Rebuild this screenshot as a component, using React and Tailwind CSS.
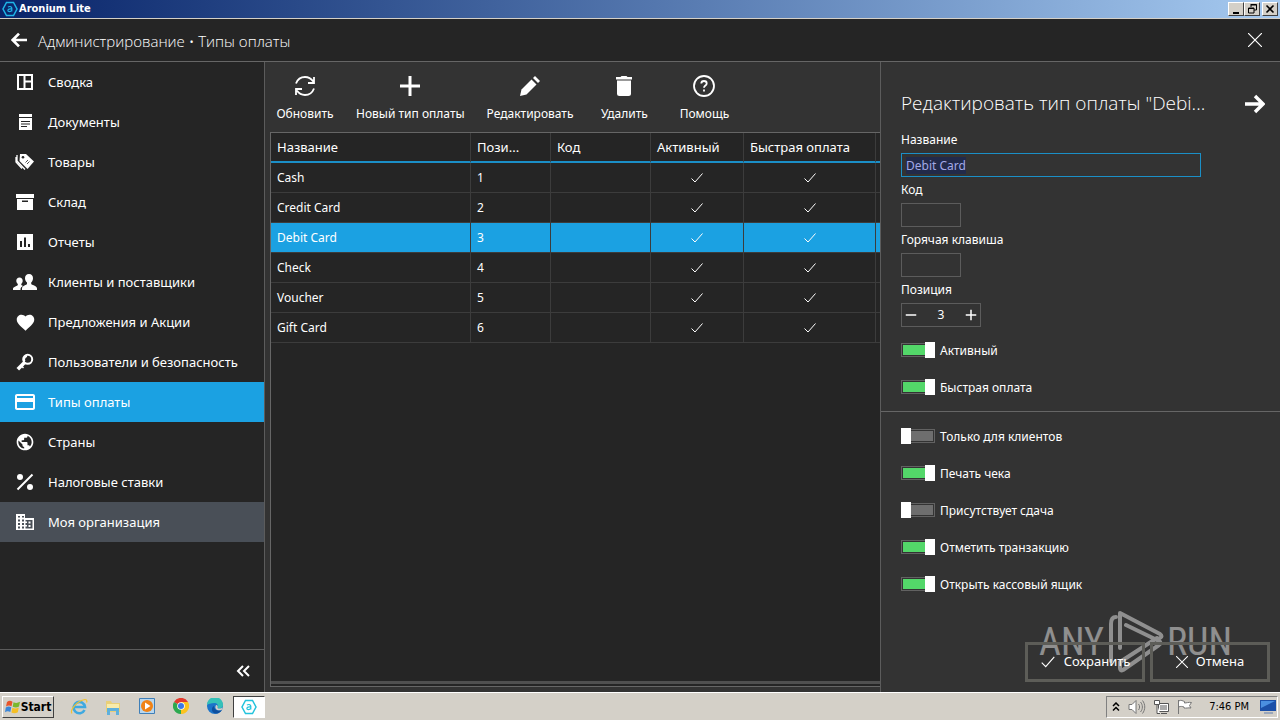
import { useState } from 'react';
import {
  MdAdd,
  MdCreditCard,
  MdFavorite,
  MdPublic,
  MdRemove,
} from 'react-icons/md';
import clsx from 'clsx';

const DashboardIcon = () => (
  <svg width="18" height="18" viewBox="0 0 18 18" fill="none" stroke="currentColor" strokeWidth="2">
    <path d="M2 2h14v14H2zM8.500 2v14M8.500 8.500H16" />
  </svg>
);

const DocumentIcon = () => (
  <svg width="18" height="18" viewBox="0 0 18 18" fill="currentColor">
    <path d="M3 1h13v3H3z" />
    <path fillRule="evenodd" d="M3 5h13v12H3zM5 8v1h9V8zM5 10.500v1h9v-1zM5 13v1h6v-1z" />
  </svg>
);

const TagsIcon = () => (
  <svg width="20" height="18" viewBox="0 0 20 18">
    <path d="M2 2v6l8 8.500M1 4v5l6 6.500" fill="none" stroke="currentColor" strokeWidth="1.300" />
    <path d="M5 1h6l8 7.500-6.500 7.500L4.500 8z" fill="currentColor" />
    <circle cx="8" cy="4.200" r="1.300" fill="#252525" />
    <path d="M10.500 9.500l2.500-2.500M12 11l2.500-2.500" stroke="#252525" strokeWidth="0.800" />
  </svg>
);

const BoxIcon = () => (
  <svg width="18" height="18" viewBox="0 0 18 18" fill="currentColor">
    <path d="M0 1h18v4H0z" />
    <path fillRule="evenodd" d="M1 6h16v11H1zM6 7.500v1.500h6V7.500z" />
  </svg>
);

const ReportIcon = () => (
  <svg width="18" height="18" viewBox="0 0 18 18" fill="currentColor">
    <path fillRule="evenodd" d="M1 1h16v16H1zM4 8v6h2V8zM8 4.500V14h2V4.500zM12 11v3h2v-3z" />
  </svg>
);

const PeopleIcon = () => (
  <svg width="24" height="18" viewBox="0 0 24 18" fill="currentColor">
    <path d="M16 1c2.600 0 4 1.800 4 4.200 0 1.800-.8 3.400-1.800 4.300v1.600c0 .8 5.800 1.900 5.800 4.300V17H9v-1.600c0-2.400 5-3.500 5-4.300V9.500c-1.100-.9-2-2.500-2-4.300C12 2.800 13.400 1 16 1z" />
    <path d="M6.500 4.500c2 0 3.200 1.300 3.200 3.200 0 1.400-.6 2.500-1.400 3.200v1.200l1.700.8c-1.500.8-2.500 1.700-2.500 3.100v1H0v-1.200c0-1.900 4.800-2.700 4.800-3.700v-1.200c-.9-.7-1.500-1.800-1.500-3.200 0-1.900 1.200-3.200 3.200-3.200z" />
  </svg>
);

const KeyIcon = () => (
  <svg width="18" height="18" viewBox="0 0 18 18" fill="none" stroke="currentColor">
    <circle cx="11.700" cy="6.300" r="4.500" strokeWidth="2" />
    <path d="M11 3a3.800 3.800 0 0 0-2.500 5.500" strokeWidth="2" />
    <path d="M9 9l-7.200 7.200" strokeWidth="3.600" />
    <path d="M5.500 13l2 2" strokeWidth="1.500" />
  </svg>
);

const PercentIcon = () => (
  <svg width="18" height="18" viewBox="0 0 18 18" fill="currentColor">
    <circle cx="4" cy="4" r="3" />
    <circle cx="14" cy="14" r="3" />
    <path d="M1.500 16.500l15-15" stroke="currentColor" strokeWidth="2" />
  </svg>
);

const BuildingIcon = () => (
  <svg width="18" height="18" viewBox="0 0 18 18" fill="currentColor">
    <path
      fillRule="evenodd"
      d="M0 1h9v4h9v12H0zM2 3v1.500h2V3zM6 3v1.500h2V3zM2 6.500v2h2v-2zM6 6.500v2h2v-2zM2 10v2h2v-2zM6 10v2h2v-2zM2 13.500v2h2v-2zM6 13.500v2h2v-2zM9.500 7v8.500h7V7z"
    />
    <path d="M9 8.500h2v1.500H9zM9 12h2v1.500H9zM12.500 8.500h2v2h-2zM12.500 12h2v2h-2z" />
  </svg>
);

const RefreshIcon = () => (
  <svg width="22" height="22" viewBox="0 0 22 22" fill="none" stroke="currentColor" strokeWidth="1.800">
    <path d="M2 8.500C3.500 4.500 6.800 2 11 2c3.500 0 6.300 1.800 8.200 4.500M20 2v6h-6" />
    <path d="M20 13.500c-1.500 4-4.800 6.500-9 6.500-3.500 0-6.300-1.800-8.200-4.500M2 20v-6h6" />
  </svg>
);

const PlusIcon = () => (
  <svg width="20" height="20" viewBox="0 0 20 20" stroke="currentColor" strokeWidth="3">
    <path d="M10 0v20M0 10h20" />
  </svg>
);

const PencilIcon = () => (
  <svg width="20" height="20" viewBox="0 0 20 20" fill="currentColor">
    <path d="M0 20l1.500-6.500L11.500 3.500l5 5L6.500 18.500z" />
    <path d="M13 2l2-2 5 5-2 2z" />
  </svg>
);

const TrashIcon = () => (
  <svg width="20" height="20" viewBox="0 0 20 20" fill="currentColor">
    <path d="M2 1h4.500l1-1h5l1 1H18v2.500H2z" />
    <path d="M3 4.500h14v13a2.500 2.500 0 0 1-2.500 2.500h-9A2.500 2.500 0 0 1 3 17.500z" />
  </svg>
);

const HelpIcon = () => (
  <svg width="22" height="22" viewBox="0 0 22 22" fill="none" stroke="currentColor" strokeWidth="1.800">
    <circle cx="11" cy="11" r="10" />
    <path d="M8.300 8.500C8.300 6.800 9.400 6 11 6s2.700.9 2.700 2.400c0 2-2.700 2.200-2.700 4.400" />
    <path d="M11 14.500v2" />
  </svg>
);

const ArrowIcon = ({ className, size = 20 }) => (
  <svg width={size} height={size} viewBox="0 0 20 20" fill="none" stroke="currentColor" strokeWidth="3.400" className={className}>
    <path d="M0 10h18M10 2l8 8-8 8" />
  </svg>
);

const CheckIcon = ({ size = 14 }) => (
  <svg width={size} height={size} viewBox="0 0 14 14" fill="none" stroke="currentColor" className="inline-block">
    <path d="M1.500 7.500l3.500 3.500L12.500 2.500" />
  </svg>
);

const CrossIcon = ({ size = 14 }) => (
  <svg width={size} height={size} viewBox="0 0 14 14" fill="none" stroke="currentColor" strokeWidth="1.200">
    <path d="M0 0l14 14M14 0L0 14" />
  </svg>
);

const AroniumIcon = ({ className }) => (
  <svg width="16" height="16" viewBox="0 0 16 16" fill="none" stroke="currentColor" className={className}>
    <path d="M4.500 1.500h7L15 8l-3.500 6.500h-7L1 8z" strokeWidth="1.500" />
    <path d="M6 6.200c1-1 3.800-1 3.800.8v3.500M9.800 8C7.500 7.800 5.900 8.100 5.900 9.400c0 1.600 2.900 1.500 3.900 0" strokeWidth="1.200" />
  </svg>
);

const menuItems = [
  { id: 'dashboard', label: 'Сводка', icon: <DashboardIcon /> },
  { id: 'documents', label: 'Документы', icon: <DocumentIcon /> },
  { id: 'products', label: 'Товары', icon: <TagsIcon /> },
  { id: 'stock', label: 'Склад', icon: <BoxIcon /> },
  { id: 'reports', label: 'Отчеты', icon: <ReportIcon /> },
  { id: 'customers', label: 'Клиенты и поставщики', icon: <PeopleIcon /> },
  { id: 'promotions', label: 'Предложения и Акции', icon: <MdFavorite size={21} /> },
  { id: 'users', label: 'Пользователи и безопасность', icon: <KeyIcon /> },
  { id: 'payments', label: 'Типы оплаты', icon: <MdCreditCard size={24} /> },
  { id: 'countries', label: 'Страны', icon: <MdPublic size={20} /> },
  { id: 'taxes', label: 'Налоговые ставки', icon: <PercentIcon /> },
  { id: 'company', label: 'Моя организация', icon: <BuildingIcon /> },
];

const toolbarItems = [
  { label: 'Обновить', icon: <RefreshIcon /> },
  { label: 'Новый тип оплаты', icon: <PlusIcon /> },
  { label: 'Редактировать', icon: <PencilIcon /> },
  { label: 'Удалить', icon: <TrashIcon /> },
  { label: 'Помощь', icon: <HelpIcon /> },
];

const paymentTypes = ['Cash', 'Credit Card', 'Debit Card', 'Check', 'Voucher', 'Gift Card'];

const TitleBar = () => (
  <div className="flex h-[19px] shrink-0 items-center border-b border-[#d4d0c8] bg-linear-to-r from-[#0a246a] to-[#a6caf0] pr-[2px] pl-[2px] font-['DejaVu_Sans_Condensed','DejaVu_Sans',sans-serif] text-white">
    <AroniumIcon className="text-[#1fb5e8]" />
    <span className="ml-px flex-1 text-[11px] font-bold">Aronium Lite</span>
    <div className="flex text-black">
      <WindowButton label="Minimize">
        <path d="M3 9h6v2H3z" fill="currentColor" />
      </WindowButton>
      <WindowButton label="Restore">
        <path d="M5 1.500h5.500V7H8M5 1v3M2.500 5H8v5H2.500zM2.500 5.500H8M5 2h5.500" fill="none" stroke="currentColor" />
      </WindowButton>
      <WindowButton label="Close" className="ml-[2px]">
        <path d="M2.500 2.500l7 7M9.500 2.500l-7 7" fill="none" stroke="currentColor" strokeWidth="1.600" />
      </WindowButton>
    </div>
  </div>
);

const WindowButton = ({ label, className, children }) => (
  <button
    type="button"
    aria-label={label}
    className={clsx(
      'flex h-[14px] w-4 items-center justify-center border border-t-white border-r-[#404040] border-b-[#404040] border-l-white bg-[#d4d0c8]',
      className
    )}
  >
    <svg width="12" height="12" viewBox="0 0 12 12">{children}</svg>
  </button>
);

const Sidebar = ({ active, onSelect }) => (
  <aside className="flex w-[265px] shrink-0 flex-col border-r border-[#5c5c5c] bg-[#252525]">
    <nav className="flex-1">
      {menuItems.map((item) => (
        <button
          key={item.id}
          type="button"
          onClick={() => onSelect(item.id)}
          className={clsx(
            'flex h-10 w-full items-center text-left text-[13px]',
            item.id === active && 'bg-[#1ba1e2]',
            item.id === 'company' && item.id !== active && 'bg-[#494f57]'
          )}
        >
          <span className="flex w-12 justify-center pl-[2px]">{item.icon}</span>
          <span className="pt-[2px] whitespace-nowrap">{item.label}</span>
        </button>
      ))}
    </nav>
    <div className="flex h-[43px] items-center justify-end border-t border-[#5c5c5c] pr-[14px]">
      <button type="button" aria-label="Свернуть меню">
        <svg width="14" height="14" viewBox="0 0 14 14" fill="none" stroke="currentColor" strokeWidth="2">
          <path d="M7 2L2 7l5 5M13 2L8 7l5 5" />
        </svg>
      </button>
    </div>
  </aside>
);

const PaymentTable = ({ selected, onSelect }) => (
  <div className="mb-[5px] ml-[5px] flex flex-1 flex-col border-t border-b border-l border-[#666666] bg-[#252525]">
    <div className="flex-1">
      <table className="w-full table-fixed border-separate border-spacing-0 text-left text-xs">
        <colgroup>
          <col className="w-[200px]" />
          <col className="w-20" />
          <col className="w-[100px]" />
          <col className="w-[93px]" />
          <col className="w-[132px]" />
          <col />
        </colgroup>
        <thead>
          <tr className="h-[30px] text-[13px]">
            {['Название', 'Пози...', 'Код', 'Активный', 'Быстрая оплата', ''].map((title) => (
              <th
                key={title}
                className="border-r border-b-2 border-r-[#3c3c3c] border-b-[#1b8fc7] px-[6px] pt-[2px] pb-0 font-normal whitespace-nowrap last:border-r-0 last:px-0"
              >
                {title}
              </th>
            ))}
          </tr>
        </thead>
        <tbody>
          {paymentTypes.map((name, index) => (
            <tr
              key={name}
              onClick={() => onSelect(name)}
              className={clsx(
                'h-[30px] *:border-r *:border-b *:border-[#3c3c3c] *:px-[6px] *:py-0 *:last:border-r-0 *:last:px-0',
                name === selected && 'bg-[#1ba1e2]'
              )}
            >
              <td>{name}</td>
              <td>{index + 1}</td>
              <td></td>
              <td className="text-center"><CheckIcon /></td>
              <td className="text-center"><CheckIcon /></td>
              <td></td>
            </tr>
          ))}
        </tbody>
      </table>
    </div>
    <div className="mb-[2px] h-[3px] bg-[#505050]" />
  </div>
);

const TextField = ({ id, label, className, ...props }) => (
  <div className="flex flex-col">
    <label htmlFor={id} className="h-[26px] leading-[26px]">{label}</label>
    <input id={id} type="text" className={clsx('h-6 border px-1 outline-none', className)} {...props} />
  </div>
);

const Toggle = ({ label, on }) => (
  <label className="flex h-4 items-center gap-[5px]">
    <input
      type="checkbox"
      defaultChecked={on}
      className="flex h-[14px] w-[34px] shrink-0 appearance-none items-center border border-[#626262] bg-[#6e6e6e] bg-clip-content p-px before:-ml-[2px] before:block before:h-4 before:w-[10px] before:shrink-0 before:bg-white checked:justify-end checked:bg-[#53d769] checked:before:-mr-[2px]"
    />
    <span className="pt-px whitespace-nowrap">{label}</span>
  </label>
);

const Watermark = () => (
  <div className="pointer-events-none absolute right-[48px] bottom-[18px] flex h-16 items-center font-['Liberation_Sans_Narrow','Roboto_Condensed','Liberation_Sans',sans-serif] text-[38px] text-white opacity-45">
    <span>ANY</span>
    <svg width="63" height="64" viewBox="1 0 63 64" fill="none" stroke="currentColor" strokeWidth="4" strokeLinejoin="round" strokeLinecap="round">
      <path d="M8 51V14c0-5 1.500-7 5-7M17 38V3l40 21c2 1.500 2 3 0 4M23 15l33 16c2 1 2 3 0 4L20 60c-2 1-3 0-3-2v-6l37-24" />
    </svg>
    <span>RUN</span>
  </div>
);

const EditPanel = () => {
  const [position, setPosition] = useState(3);

  return (
    <section className="relative flex w-[400px] shrink-0 flex-col border-l border-[#5c5c5c] bg-[#333333] text-xs">
      <div className="flex h-[65px] items-center justify-between pt-[18px] pr-[15px] pl-5">
        <h2 className="font-['Open_Sans','Noto_Sans',sans-serif] text-[19px] font-light whitespace-nowrap">
          Редактировать тип оплаты "Debi...
        </h2>
        <button type="button" aria-label="Скрыть панель">
          <ArrowIcon />
        </button>
      </div>

      <div className="flex flex-col items-start px-5">
        <TextField
          id="name"
          label="Название"
          defaultValue="Debit Card"
          autoFocus
          onFocus={(e) => e.target.select()}
          className="w-[300px] border-[#1b8fc7] text-[#a3a9e6] selection:bg-[#222a4a] selection:text-[#a3a9e6]"
        />
        <TextField id="code" label="Код" className="w-[60px] border-[#5c5c5c]" />
        <TextField id="hotkey" label="Горячая клавиша" className="w-[60px] border-[#5c5c5c]" />
        <label htmlFor="position" className="h-[26px] leading-[26px]">Позиция</label>
        <div className="flex h-6 w-20 items-center border border-[#5c5c5c]">
          <button type="button" aria-label="Уменьшить" onClick={() => setPosition((p) => p - 1)} className="flex w-[18px] justify-center">
            <MdRemove size={18} />
          </button>
          <input
            id="position"
            type="text"
            value={position}
            onChange={(e) => setPosition(Number(e.target.value) || 0)}
            className="min-w-0 flex-1 text-center outline-none"
          />
          <button type="button" aria-label="Увеличить" onClick={() => setPosition((p) => p + 1)} className="flex w-[18px] justify-center">
            <MdAdd size={18} />
          </button>
        </div>
      </div>

      <div className="flex flex-col gap-[21px] border-b border-[#666666] px-5 pt-[15px] pb-4">
        <Toggle label="Активный" on />
        <Toggle label="Быстрая оплата" on />
      </div>
      <div className="flex flex-1 flex-col gap-[21px] px-5 pt-4">
        <Toggle label="Только для клиентов" />
        <Toggle label="Печать чека" on />
        <Toggle label="Присутствует сдача" />
        <Toggle label="Отметить транзакцию" on />
        <Toggle label="Открыть кассовый ящик" on />
      </div>

      <Watermark />
      <div className="flex justify-end gap-[5px] p-[10px] text-[13px]">
        <button type="button" className="relative flex h-10 w-[120px] items-center justify-center gap-2 border-3 border-[#5d5d58]">
          <CheckIcon size={16} />
          Сохранить
        </button>
        <button type="button" className="relative flex h-10 w-[120px] items-center justify-center gap-2 border-3 border-[#5d5d58]">
          <CrossIcon size={12} />
          Отмена
        </button>
      </div>
    </section>
  );
};

const IeIcon = () => (
  <svg width="18" height="18" viewBox="0 0 18 18" fill="none">
    <path d="M14.500 12A5.700 5.700 0 1 1 15 9H5" stroke="#3fa9e0" strokeWidth="2.600" />
    <path d="M2 15.500C-1 13 7 2.500 15 1.500c3 0 1.500 3 1.500 3" stroke="#f2c230" strokeWidth="1.200" />
  </svg>
);

const FolderIcon = () => (
  <svg width="18" height="18" viewBox="0 0 18 18">
    <path d="M2 3h5l1 2h8v9H2z" fill="#e9cf78" />
    <path d="M3 6h12v5H3z" fill="#f8ebaa" />
    <path d="M3 10h12v7h-3v-4H6v4H3z" fill="#5fb0dc" />
  </svg>
);

const PlayerIcon = () => (
  <svg width="16" height="16" viewBox="0 0 16 16">
    <path d="M.5.500h15v15H.5z" fill="#b9d7ee" stroke="#3f7fb8" />
    <circle cx="8" cy="8" r="6" fill="#f08316" />
    <path d="M6 4.500L11.500 8 6 11.500z" fill="#fff" />
  </svg>
);

const ChromeIcon = () => (
  <svg width="16" height="16" viewBox="0 0 16 16">
    <path d="M8 8L1 4a8 8 0 0 1 14 0z" fill="#e33b2e" />
    <path d="M8 8V4h7a8 8 0 0 1-7 12z" fill="#fcc31e" />
    <path d="M8 8l0 8A8 8 0 0 1 1 4z" fill="#2da94f" />
    <circle cx="8" cy="8" r="3.800" fill="#fff" />
    <circle cx="8" cy="8" r="3" fill="#3b78e7" />
  </svg>
);

const EdgeIcon = () => (
  <svg width="16" height="16" viewBox="0 0 16 16">
    <circle cx="8" cy="8" r="8" fill="#1b74c9" />
    <path d="M0 7a8 8 0 0 1 16 0c0 3-3 4-5.500 3 1-2 .5-5-3-5C4 5 1 6 0 7z" fill="#35c1b8" />
    <path d="M7 8c0 4 4 5.500 8 4-2 3-5 4-8 3-3-2-2.500-6 0-7z" fill="#0d4f9e" />
    <path d="M9 7c2 0 2 2 1.500 3 1 .8 3 1 5.500-.5L14.500 12C10 13 7 11 9 7z" fill="#d4d0c8" />
  </svg>
);

const quickLaunch = [
  { label: 'Internet Explorer', icon: <IeIcon /> },
  { label: 'Explorer', icon: <FolderIcon /> },
  { label: 'Media Player', icon: <PlayerIcon /> },
  { label: 'Chrome', icon: <ChromeIcon /> },
  { label: 'Edge', icon: <EdgeIcon /> },
];

const Taskbar = () => (
  <footer className="flex h-7 shrink-0 items-center border-t border-white bg-[#d4d0c8] px-[2px] pt-px font-['DejaVu_Sans_Condensed','DejaVu_Sans',sans-serif] text-black">
    <button
      type="button"
      className="flex h-[22px] w-[52px] items-center justify-center border border-t-white border-r-[#404040] border-b-[#404040] border-l-white text-xs font-bold"
    >
      <svg width="16" height="16" viewBox="0 0 16 16" className="shrink-0">
        <path d="M2 3c2-1.500 3.500-1.500 5.500-.3L6.500 7.300C4.800 6.200 3 6.200 1 7.500z" fill="#e8542a" />
        <path d="M8.500 3.200c2 1 4 1 6.500-.4L14 7.500c-2 1.300-4 1.300-6.300.2z" fill="#7ab82c" />
        <path d="M.8 8.500c2-1.300 3.700-1.300 5.500-.2L5.300 13c-1.800-1-3.500-1-5.300.2z" fill="#3a86d8" />
        <path d="M7.400 8.800c2 1 4 1 6.400-.3l-1 4.700c-2.200 1.300-4.300 1.300-6.400.2z" fill="#f5bf25" />
      </svg>
      Start
    </button>
    <div className="ml-2 flex">
      {quickLaunch.map((item) => (
        <button key={item.label} type="button" aria-label={item.label} className="flex w-[34px] justify-center">
          {item.icon}
        </button>
      ))}
    </div>
    <button
      type="button"
      aria-label="Aronium"
      className="ml-px flex h-[22px] w-8 items-center justify-center border border-t-[#404040] border-r-white border-b-white border-l-[#404040] bg-white text-[#22c3dc]"
    >
      <AroniumIcon />
    </button>
    <div className="ml-auto flex h-[22px] items-center border border-t-[#808080] border-r-white border-b-white border-l-[#808080] pr-px pl-[5px]">
      <svg width="8" height="10" viewBox="0 0 8 10" fill="none" stroke="currentColor" strokeWidth="1.500">
        <path d="M1 4l3-3 3 3M1 8.500l3-3 3 3" />
      </svg>
      <svg width="18" height="16" viewBox="0 0 18 16" fill="none" stroke="#777" className="ml-2">
        <path d="M1 5.500h3l4-4v13l-4-4H1z" fill="#fff" />
        <path d="M10.500 5c1.500 2 1.500 4 0 6M12.500 3c2.500 3 2.500 7 0 10M14.500 1.500c3 4 3 9 0 13" />
      </svg>
      <svg width="16" height="16" viewBox="0 0 16 16" fill="#fff" stroke="#555" className="ml-[7px]">
        <path d="M5.500 4.500h10v8h-10zM8 14.500h6" />
        <path d="M7 6h7v5H7z" fill="#aaa" stroke="none" />
        <path d="M1.500 1.500h5v4h-5zM4 5.500v9h3" />
      </svg>
      <svg width="16" height="16" viewBox="0 0 16 16" fill="#fff" stroke="#777" className="ml-2">
        <path d="M1.500 1v14M1.500 2c3-1.500 4 0 6 .5v1.500c2 0 4-1 7-.5l-2 3 1.500 2.500c-3-.5-5 .5-7 0V8C5.500 7.500 4 7 1.500 8z" />
      </svg>
      <span className="ml-4 text-[11px]">7:46 PM</span>
      <svg width="16" height="14" viewBox="0 0 16 14" className="ml-[11px]">
        <path d="M0 0h16v11H0z" fill="#1c50a8" />
        <path d="M1 1h14L1 8z" fill="#4b8fe0" />
        <path d="M4 12h9v2H4z" fill="#9aa7bb" />
      </svg>
    </div>
  </footer>
);

export default function App() {
  const [page, setPage] = useState('payments');
  const [selected, setSelected] = useState('Debit Card');

  return (
    <div className="flex h-screen flex-col overflow-hidden bg-[#252525] font-['Noto_Sans',sans-serif] text-white">
      <TitleBar />
      <header className="flex h-[43px] shrink-0 items-center border-b border-[#666666] pr-[18px] pl-[11px]">
        <button type="button" aria-label="Назад">
          <ArrowIcon size={16} className="rotate-180" />
        </button>
        <h1 className="ml-[11px] flex-1 pt-[2px] font-['Open_Sans','Noto_Sans',sans-serif] text-[15px] font-light">
          Администрирование • Типы оплаты
        </h1>
        <button type="button" aria-label="Закрыть">
          <CrossIcon />
        </button>
      </header>

      <div className="flex min-h-0 flex-1">
        <Sidebar active={page} onSelect={setPage} />
        <main className="flex min-w-0 flex-1 flex-col bg-[#333333]">
          <div className="flex h-[70px] shrink-0">
            {toolbarItems.map((item) => (
              <button key={item.label} type="button" className="flex min-w-20 flex-col items-center px-[11px] pt-[5px] text-xs">
                <span className="mb-px flex h-[38px] items-center">{item.icon}</span>
                <span className="whitespace-nowrap">{item.label}</span>
              </button>
            ))}
          </div>
          <PaymentTable selected={selected} onSelect={setSelected} />
        </main>
        <EditPanel />
      </div>
      <Taskbar />
    </div>
  );
}
